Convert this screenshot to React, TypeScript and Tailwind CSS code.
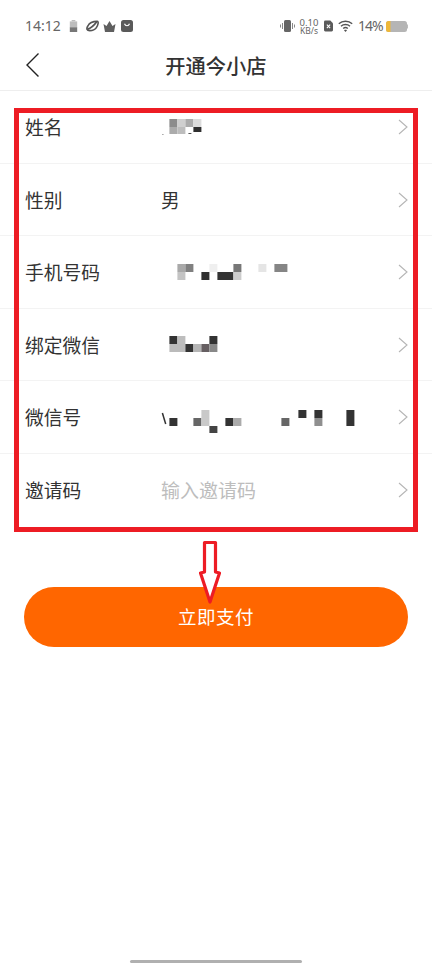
import React from "react";

type Cell = [number, number, number, number, string];

const font = { fontFamily: '"Noto Sans CJK SC", "Noto Sans", sans-serif' };

const name: Cell[] = [
  [8, 9, 8, 8, "#8c8c8c"], [16, 9, 8, 8, "#cfcfcf"], [24, 9, 8, 8, "#ababab"], [32, 9, 8, 8, "#dcdcdc"],
  [8, 17, 8, 7, "#ababab"], [16, 17, 8, 7, "#bdbdbd"], [32, 17, 8, 5, "#2f2f2f"], [1, 24, 1, 1, "#777777"], [27, 23, 3, 1, "#555555"],
];
const phone: Cell[] = [
  [16, 8, 8, 8, "#a9a9a9"], [24, 8, 8, 8, "#808080"], [16, 16, 8, 8, "#c4c4c4"],
  [40, 16, 8, 8, "#303030"], [48, 8, 8, 8, "#efefef"], [56, 16, 16, 8, "#333333"],
  [72, 8, 8, 8, "#777777"], [72, 16, 8, 8, "#cccccc"], [97, 8, 8, 8, "#e5e5e5"], [113, 8, 13, 8, "#858585"],
];
const wechat: Cell[] = [
  [8, 8, 8, 8, "#333333"], [16, 8, 8, 8, "#bdbdbd"], [8, 16, 16, 8, "#bbbbbb"], [24, 16, 8, 8, "#333333"],
  [32, 16, 8, 8, "#b5b5b5"], [40, 16, 8, 8, "#665f62"], [48, 8, 8, 8, "#333333"], [48, 16, 8, 8, "#888888"],
];
const wxid: Cell[] = [
  [8, 16, 8, 8, "#333333"], [32, 16, 8, 8, "#666666"], [40, 8, 8, 16, "#c9c9c9"], [48, 24, 8, 7, "#444444"],
  [64, 16, 8, 8, "#333333"], [72, 16, 8, 8, "#ababab"], [120, 16, 8, 8, "#666666"], [137, 8, 8, 8, "#333333"],
  [153, 8, 8, 8, "#333333"], [153, 16, 8, 8, "#8f8f8f"], [185, 8, 8, 16, "#333333"],
];

function Mosaic({ cells, dy = 0, slash }: { cells: Cell[]; dy?: number; slash?: boolean }) {
  return (
    <svg width="210" height="36" viewBox="0 0 210 36" className="block">
      <g transform={`translate(0.4 ${dy})`}>
        {cells.map(([x, y, w, h, c], i) => (
          <rect key={i} x={x} y={y} width={w} height={h} fill={c} />
        ))}
        {slash && <path d="M1 11 L4.3 22" stroke="#333" strokeWidth="1.5" />}
      </g>
    </svg>
  );
}

function Row({ label, value, last }: { label: string; value: React.ReactNode; last?: boolean }) {
  return (
    <div className={`flex h-[72.5px] items-center pl-[25px] pr-[24px] ${last ? "" : "border-b border-[#f3f3f3]"}`}>
      <div className="mt-[1px] w-[136px] text-[18.75px] leading-[24px] text-[#333333]">{label}</div>
      <div className="flex-1">{value}</div>
      <svg width="10" height="16" viewBox="0 0 10 16" fill="none" className="mt-[1px]">
        <path d="M1 1 L9 8 L1 15" stroke="#b5b5b5" strokeWidth="1.1" />
      </svg>
    </div>
  );
}

function StatusBar() {
  return (
    <div className="flex h-[53px] items-center justify-between pl-[25px] pr-[24px] pb-[1px] text-[#666666]">
      <div className="flex items-center">
        <span className="text-[14px] leading-none" style={{ fontFamily: '"Noto Sans", sans-serif' }}>14:12</span>
        <svg width="9" height="12" viewBox="0 0 9 13" className="ml-[8px]">
          <rect x="2.5" y="0" width="4" height="1.5" fill="#bdbdbd" />
          <rect x="0.5" y="1.5" width="8" height="7" fill="#bdbdbd" />
          <rect x="0.5" y="8" width="8" height="5" fill="#777777" />
        </svg>
        <svg width="13" height="12" viewBox="0 0 14 12" className="ml-[8px]" fill="none">
          <path d="M4 11 C1 11 0 9 2 6 C4 2 8 1 12 1 C14 1 13 5 11 8 C9 11 7 11 4 11Z" fill="#ffffff" stroke="#555" strokeWidth="1.7" />
          <path d="M1.5 9.5 C5 8.5 9 5 11.5 1.5" stroke="#555" strokeWidth="2" />
        </svg>
        <svg width="13" height="11" viewBox="0 0 13 11" className="ml-[4px]">
          <path d="M0.5 3 L3.5 5 L6.5 0 L9.5 5 L12.5 3 L11 11 L2 11Z" fill="#5f5f5f" />
        </svg>
        <svg width="12" height="12" viewBox="0 0 12 12" className="ml-[5px]" fill="none">
          <rect width="12" height="12" rx="2.5" fill="#5a5a5a" />
          <path d="M3.5 3.8 C4.5 6.4 7.5 6.4 8.5 3.8" stroke="#fff" strokeWidth="1.2" />
        </svg>
      </div>
      <div className="flex items-center">
        <svg width="15" height="12" viewBox="0 0 15 12">
          <rect x="4" y="0" width="7" height="12" rx="1.5" fill="#666" />
          <rect x="2" y="3" width="1" height="6" fill="#888" />
          <rect x="12" y="3" width="1" height="6" fill="#888" />
          <rect x="0" y="4.5" width="1" height="3" fill="#888" />
          <rect x="14" y="4.5" width="1" height="3" fill="#888" />
        </svg>
        <div className="ml-[5px] flex w-[18px] flex-col items-center" style={{ fontFamily: '"Noto Sans", sans-serif' }}>
          <div className="h-[8px] text-[9.5px] leading-[8px]">0.10</div>
          <div className="h-[7px] text-[8.5px] leading-[7px]">KB/s</div>
        </div>
        <svg width="9" height="12" viewBox="0 0 10 12" className="ml-[6px]">
          <path d="M0 1.5 Q0 0 1.5 0 L7 0 L10 3 L10 10.5 Q10 12 8.5 12 L1.5 12 Q0 12 0 10.5Z" fill="#5a5a5a" />
          <path d="M3.2 4.6 L6.8 8.4 M6.8 4.6 L3.2 8.4" stroke="#fff" strokeWidth="1.2" />
        </svg>
        <svg width="15" height="12" viewBox="0 0 15 12" className="ml-[5px]" fill="none">
          <path d="M0.8 3.8 C4.5 0.4 10.5 0.4 14.2 3.8" stroke="#555" strokeWidth="1.4" />
          <path d="M3 6.2 C5.5 4 9.5 4 12 6.2" stroke="#555" strokeWidth="1.4" />
          <path d="M5.2 8.5 C6.5 7.4 8.5 7.4 9.8 8.5" stroke="#555" strokeWidth="1.4" />
          <path d="M7.5 12 L6 10.2 C7 9.6 8 9.6 9 10.2Z" fill="#555" />
        </svg>
        <span className="ml-[5px] w-[24px] whitespace-nowrap text-[14px] leading-none tracking-[-1px]" style={{ fontFamily: '"Noto Sans", sans-serif' }}>14%</span>
        <svg width="22" height="11" viewBox="0 0 22 11" className="ml-[4px]">
          <rect width="21" height="11" rx="2.5" fill="#b5b5b5" />
          <path d="M2.5 0 L4.5 0 L4.5 11 L2.5 11 Q0 11 0 8.5 L0 2.5 Q0 0 2.5 0Z" fill="#eeb83a" />
          <rect x="21" y="3.5" width="1" height="4" fill="#bbb" />
        </svg>
      </div>
    </div>
  );
}

export default function App() {
  return (
    <div className="relative h-[964px] w-[432px] overflow-hidden bg-white" style={font}>
      <StatusBar />
      <div className="relative flex h-[38px] items-center justify-center border-b border-[#eeeeee]">
        <svg width="14" height="24" viewBox="0 0 14 24" fill="none" className="absolute left-[26px] top-[0px]">
          <path d="M12.5 0.5 L1 12 L12.5 23.5" stroke="#222222" strokeWidth="1.4" />
        </svg>
        <div className="mb-[12px] text-[20.25px] font-medium leading-[26px] text-[#333333]">开通今小店</div>
      </div>

      <Row label="姓名" value={<Mosaic cells={name} dy={1} />} />
      <Row label="性别" value={<span className="mt-[1px] block text-[18.75px] leading-[24px] text-[#333333]">男</span>} />
      <Row label="手机号码" value={<Mosaic cells={phone} dy={2} />} />
      <Row label="绑定微信" value={<Mosaic cells={wechat} dy={2} />} />
      <Row label="微信号" value={<Mosaic cells={wxid} dy={3} slash />} />
      <Row label="邀请码" value={<span className="mt-[1px] block text-[19px] leading-[24px] text-[#bdbdbd]">输入邀请码</span>} last />

      <div className="mx-[24px] mt-[61px] flex h-[59.5px] items-center justify-center rounded-[30px] bg-[#ff6600] text-[18.5px] tracking-[0.5px] text-[#ffffff]">
        立即支付
      </div>

      {/* Red annotation frame, drawn over the form */}
      <div className="pointer-events-none absolute left-[14px] top-[108px] h-[424px] w-[404px] border-[5px] border-[#ed1c24]" />

      {/* Red annotation arrow */}
      <svg width="24" height="66" viewBox="0 0 24 66" className="pointer-events-none absolute left-[198px] top-[540px]">
        <path d="M6.5 2.5 L17.5 2.5 L17.5 32 L21.5 33 L12 62 L2.5 33 L6.5 32Z" fill="#ffffff" stroke="#ed1c24" strokeWidth="3.2" strokeLinejoin="round" />
      </svg>

      <div className="absolute bottom-[1px] left-[130px] h-[3px] w-[172px] rounded-full bg-[#b0b0b0]" />
    </div>
  );
}
